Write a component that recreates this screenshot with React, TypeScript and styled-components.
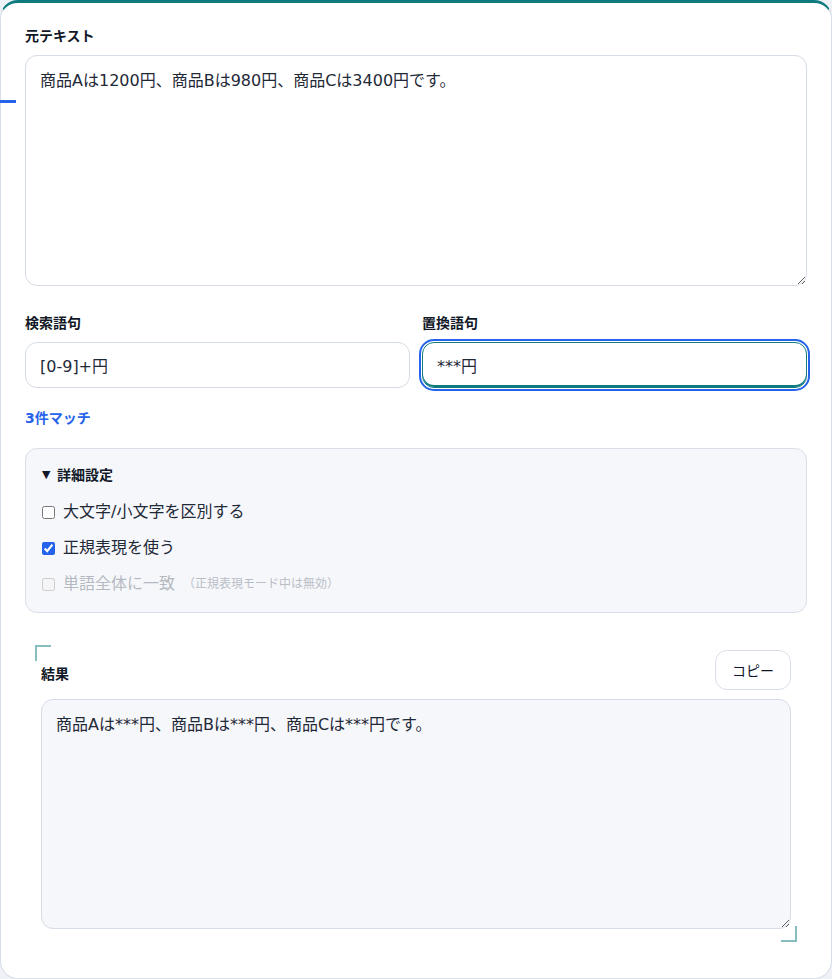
import React, { useState } from "react";
import styled, { createGlobalStyle } from "styled-components";

const GlobalStyle = createGlobalStyle`
  html, body {
    margin: 0;
    padding: 0;
    background: #eef2f6;
  }
  body {
    font-family: "DejaVu Sans", "Noto Sans CJK JP", sans-serif;
    color: #1f2937;
  }
  * {
    box-sizing: border-box;
  }
`;

const Card = styled.div`
  position: relative;
  width: 832px;
  background: #fff;
  border: 1px solid #d9dfe8;
  border-top: 3px solid #0f7b7f;
  border-radius: 18px;
  padding: 22px 24px 36px;
`;

const EdgeMark = styled.span`
  position: absolute;
  left: -1px;
  top: 97px;
  width: 16px;
  height: 3px;
  background: #2563eb;
`;

const Label = styled.label`
  display: block;
  font-size: 14px;
  line-height: 22px;
  font-weight: 700;
  color: #111827;
  margin-bottom: 8px;
`;

const TextArea = styled.textarea<{ $muted?: boolean }>`
  display: block;
  width: 100%;
  height: 231px;
  margin: 0;
  padding: 12px 14px;
  font-family: inherit;
  font-size: 16px;
  line-height: 1.6;
  color: #1f2937;
  background: ${({ $muted }) => ($muted ? "#f6f7fb" : "#fff")};
  border: 1px solid #d5dce6;
  border-radius: 12px;
  resize: vertical;
  outline: none;
`;

const FieldGrid = styled.div`
  display: grid;
  grid-template-columns: 1fr 1fr;
  gap: 12px;
  margin-top: 26px;
`;

const Field = styled.div`
  display: flex;
  flex-direction: column;
`;

const Input = styled.input<{ $focused?: boolean }>`
  height: 46px;
  width: 100%;
  margin: 0;
  padding: 0 14px;
  font-family: inherit;
  font-size: 16px;
  color: #1f2937;
  background: #fff;
  border: 1px solid ${({ $focused }) => ($focused ? "#0f7b7f" : "#d5dce6")};
  border-radius: 12px;
  box-shadow: ${({ $focused }) => ($focused ? "inset 0 -2px 0 #0f7b7f" : "none")};
  outline: ${({ $focused }) => ($focused ? "2px solid #2563eb" : "none")};
  outline-offset: 1px;
`;

const MatchCount = styled.div`
  margin: 20px 0;
  font-size: 14px;
  line-height: 20px;
  font-weight: 700;
  color: #2563eb;
`;

const Details = styled.details`
  background: #f6f7fb;
  border: 1px solid #d9dfe8;
  border-radius: 12px;
  padding: 15px 16px 15px;
`;

const Summary = styled.summary`
  display: flex;
  align-items: center;
  gap: 6px;
  list-style: none;
  font-size: 14px;
  line-height: 22px;
  font-weight: 700;
  color: #111827;
  cursor: pointer;
  margin-bottom: 13px;

  &::-webkit-details-marker {
    display: none;
  }
`;

const Caret = styled.span`
  font-size: 11px;
  width: 9px;
`;

const Options = styled.div`
  display: flex;
  flex-direction: column;
  gap: 10px;
`;

const OptionRow = styled.label<{ $disabled?: boolean }>`
  display: flex;
  align-items: center;
  gap: 8px;
  font-size: 16px;
  line-height: 26px;
  color: ${({ $disabled }) => ($disabled ? "#b4b9c1" : "#1f2937")};

  input {
    margin: 0;
    width: 13px;
    height: 13px;
    accent-color: #2563eb;
  }
`;

const Note = styled.span`
  font-size: 12px;
  color: #b9bec6;
`;

const ResultSection = styled.section`
  position: relative;
  margin: 32px 10px 0;
  padding: 5px 6px 13px;

  &::before,
  &::after {
    content: "";
    position: absolute;
    width: 14px;
    height: 14px;
    border: 0 solid rgba(15, 123, 127, 0.5);
  }
  &::before {
    top: 0;
    left: 0;
    border-top-width: 2px;
    border-left-width: 2px;
  }
  &::after {
    right: 0;
    bottom: 0;
    border-bottom-width: 2px;
    border-right-width: 2px;
  }
`;

const ResultHeader = styled.div`
  display: flex;
  justify-content: space-between;
  align-items: center;
  margin-bottom: 9px;

  label {
    margin: 8px 0 0;
  }
`;

const CopyButton = styled.button`
  height: 40px;
  padding: 0 16px;
  font-family: inherit;
  font-size: 14px;
  color: #0f172a;
  background: #fff;
  border: 1px solid #d9dfe8;
  border-radius: 12px;
  cursor: pointer;
`;

export default function App() {
  const [source, setSource] = useState("商品Aは1200円、商品Bは980円、商品Cは3400円です。");
  const [search, setSearch] = useState("[0-9]+円");
  const [replace, setReplace] = useState("***円");

  let result = source;
  let count = 0;
  try {
    const re = new RegExp(search, "g");
    count = (source.match(re) || []).length;
    result = source.replace(re, replace);
  } catch {
    count = 0;
  }

  return (
    <>
      <GlobalStyle />
      <Card>
        <EdgeMark />
        <Label>元テキスト</Label>
        <TextArea value={source} onChange={(e) => setSource(e.target.value)} />

        <FieldGrid>
          <Field>
            <Label>検索語句</Label>
            <Input value={search} onChange={(e) => setSearch(e.target.value)} />
          </Field>
          <Field>
            <Label>置換語句</Label>
            <Input $focused value={replace} onChange={(e) => setReplace(e.target.value)} />
          </Field>
        </FieldGrid>

        <MatchCount>{count}件マッチ</MatchCount>

        <Details open>
          <Summary>
            <Caret>▼</Caret>
            詳細設定
          </Summary>
          <Options>
            <OptionRow>
              <input type="checkbox" />
              大文字/小文字を区別する
            </OptionRow>
            <OptionRow>
              <input type="checkbox" defaultChecked />
              正規表現を使う
            </OptionRow>
            <OptionRow $disabled>
              <input type="checkbox" disabled />
              単語全体に一致
              <Note>（正規表現モード中は無効）</Note>
            </OptionRow>
          </Options>
        </Details>

        <ResultSection>
          <ResultHeader>
            <Label>結果</Label>
            <CopyButton>コピー</CopyButton>
          </ResultHeader>
          <TextArea $muted readOnly value={result} style={{ height: 230 }} />
        </ResultSection>
      </Card>
    </>
  );
}
